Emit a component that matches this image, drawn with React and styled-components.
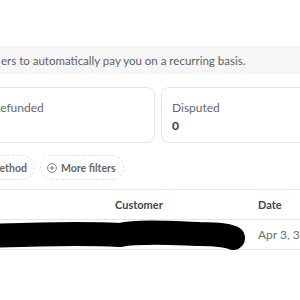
import { createGlobalStyle, styled } from 'styled-components'

const GlobalStyle = createGlobalStyle`
  html, body {
    margin: 0;
    padding: 0;
    background: #ffffff;
    overflow: hidden;
  }
  body {
    font-family: Lato, "Noto Sans", sans-serif;
    color: #333;
  }
`

const Page = styled.div`
  width: 300px;
  height: 300px;
  overflow: hidden;
  padding-top: 46px;
  box-sizing: border-box;
`

const Banner = styled.div`
  height: 28px;
  background: #f6f6f7;
  display: flex;
  align-items: center;
  font-size: 11.5px;
  color: #5f5f63;
  white-space: nowrap;
  padding-left: 1px;
`

const CardRow = styled.div`
  display: flex;
  gap: 6px;
  margin: 13px 0 0 -18px;
`

const Card = styled.div`
  flex: 0 0 173px;
  height: 56px;
  box-sizing: border-box;
  border: 1px solid #e4e4e6;
  border-radius: 8px;
  padding: 12px 10px 0;
  display: flex;
  flex-direction: column;
  gap: 3px;
`

const CardLabel = styled.div`
  font-size: 12px;
  color: #67676c;
  white-space: nowrap;
`

const CardValue = styled.div`
  font-size: 12px;
  font-weight: 700;
  color: #36363a;
`

const Filters = styled.div`
  display: flex;
  gap: 5px;
  margin: 12px 0 0 -60px;
`

const Pill = styled.div`
  height: 25px;
  box-sizing: border-box;
  border: 1px dashed #e2e2e4;
  border-radius: 13px;
  padding: 0 7px 0 6px;
  display: flex;
  align-items: center;
  gap: 4px;
  font-size: 10.5px;
  font-weight: 700;
  color: #66666b;
  white-space: nowrap;
`

const Table = styled.div`
  margin-top: 9px;
  border-top: 1px solid #e6e6e8;
`

const Row = styled.div`
  display: grid;
  grid-template-columns: 115px 143px 1fr;
  align-items: center;
  height: 29px;
  border-bottom: 1px solid #e6e6e8;
  font-size: 12px;
  white-space: nowrap;
`

const HeadCell = styled.div`
  font-size: 11px;
  font-weight: 700;
  color: #45454a;
`

const Cell = styled.div`
  color: #6e6e73;
`

const RedactedRow = styled(Row)`
  position: relative;
`

const Redaction = styled.svg`
  position: absolute;
  left: 0;
  top: 0;
`

const PlusCircle = () => (
  <svg width="10" height="10" viewBox="0 0 12 12" fill="none" stroke="#707075" strokeWidth="1.1">
    <circle cx="6" cy="6" r="5.3" />
    <path d="M6 3.3v5.4M3.3 6h5.4" />
  </svg>
)

export default function App() {
  return (
    <>
      <GlobalStyle />
      <Page>
        <Banner>ers to automatically pay you on a recurring basis.</Banner>
        <CardRow>
          <Card>
            <CardLabel>Refunded</CardLabel>
            <CardValue>0</CardValue>
          </Card>
          <Card>
            <CardLabel>Disputed</CardLabel>
            <CardValue>0</CardValue>
          </Card>
        </CardRow>
        <Filters>
          <Pill>Payment method</Pill>
          <Pill>
            <PlusCircle />
            More filters
          </Pill>
        </Filters>
        <Table>
          <Row>
            <div />
            <HeadCell>Customer</HeadCell>
            <HeadCell>Date</HeadCell>
          </Row>
          <RedactedRow>
            <div />
            <div />
            <Cell>Apr 3, 3:14 PM</Cell>
            <Redaction width="250" height="32" viewBox="0 0 250 32">
              <path
                d="M-10 16 C40 14 80 13 120 15 C140 11 170 13 200 14 C218 14 230 16 233 18"
                stroke="#000"
                strokeWidth="24"
                strokeLinecap="round"
                fill="none"
              />
            </Redaction>
          </RedactedRow>
        </Table>
      </Page>
    </>
  )
}
